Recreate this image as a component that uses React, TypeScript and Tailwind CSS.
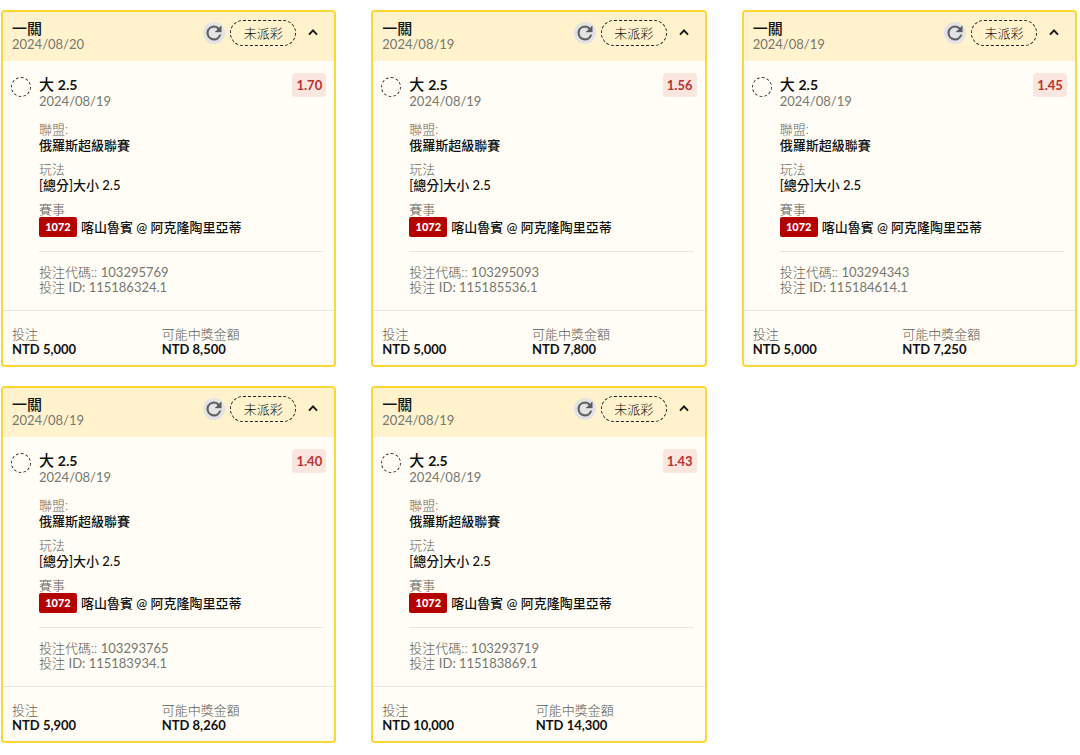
import React from 'react';

type Bet = {
  placed: string;
  matchDate: string;
  odds: string;
  code: string;
  id: string;
  stake: string;
  payout: string;
};

const bets: Bet[] = [
  { placed: '2024/08/20', matchDate: '2024/08/19', odds: '1.70', code: '103295769', id: '115186324.1', stake: '5,000', payout: '8,500' },
  { placed: '2024/08/19', matchDate: '2024/08/19', odds: '1.56', code: '103295093', id: '115185536.1', stake: '5,000', payout: '7,800' },
  { placed: '2024/08/19', matchDate: '2024/08/19', odds: '1.45', code: '103294343', id: '115184614.1', stake: '5,000', payout: '7,250' },
  { placed: '2024/08/19', matchDate: '2024/08/19', odds: '1.40', code: '103293765', id: '115183934.1', stake: '5,900', payout: '8,260' },
  { placed: '2024/08/19', matchDate: '2024/08/19', odds: '1.43', code: '103293719', id: '115183869.1', stake: '10,000', payout: '14,300' },
];

function RefreshIcon() {
  return (
    <svg viewBox="0 0 24 24" className="size-[22px]" fill="#5c5c5c" stroke="#5c5c5c" strokeWidth="0.3" aria-hidden="true">
      <path d="M17.65 6.35A7.96 7.96 0 0 0 12 4a8 8 0 1 0 7.73 10h-2.08A6 6 0 1 1 12 6c1.66 0 3.14.69 4.22 1.78L13 11h7V4z" />
    </svg>
  );
}

function Field({ label, children }: { label: string; children: React.ReactNode }) {
  return (
    <div>
      <dt className="font-light text-[#66665f]">{label}</dt>
      <dd className="font-medium">{children}</dd>
    </div>
  );
}

function BetCard({ bet }: { bet: Bet }) {
  return (
    <article className="overflow-hidden rounded-[4px] border-2 border-[#fdd835] bg-[#fffdf5]">
      <header className="flex items-start bg-[#fff2cc] pt-2 pr-[11px] pb-[9px] pl-[9px]">
        <div className="flex-1">
          <h2 className="text-[15px] leading-4 font-medium">一關</h2>
          <p className="text-[#777771]">{bet.placed}</p>
        </div>
        <div className="flex h-[26px] items-center">
          <button type="button" aria-label="重新整理" className="flex size-[22px] items-center justify-center rounded-full bg-[#e3e3e6]">
            <RefreshIcon />
          </button>
          <span className="ml-[5px] flex h-[26px] w-[66px] items-center justify-center rounded-full border border-dashed border-[#222] font-light">
            未派彩
          </span>
          <button type="button" aria-label="收合" className="ml-[7px] flex size-5 items-center justify-center">
            <svg viewBox="0 0 20 20" className="size-5" fill="none" stroke="#1a1a1a" strokeWidth="2" aria-hidden="true">
              <path d="M6 11.6 10 7.4l4 4.2" />
            </svg>
          </button>
        </div>
      </header>

      <section className="flex gap-2 px-2 pt-[15px] pb-[14px]">
        <span className="mt-px size-5 shrink-0 rounded-full border border-dashed border-[#222]" />
        <div className="flex-1">
          <div className="flex items-start justify-between">
            <div>
              <h3 className="text-[15px] leading-4 font-medium">
                大 <b className="text-sm leading-4 font-bold">2.5</b>
              </h3>
              <p className="text-[#777771]">{bet.matchDate}</p>
            </div>
            <span className="-mt-[3px] flex h-6 w-[34px] items-center justify-center rounded-[4px] bg-[#f9e6df] text-[13px] font-bold text-[#b9312f]">
              {bet.odds}
            </span>
          </div>
          <dl className="mt-3 flex flex-col gap-2">
            <Field label="聯盟:">俄羅斯超級聯賽</Field>
            <Field label="玩法">[總分]大小 2.5</Field>
            <Field label="賽事">
              <span className="flex items-center gap-1">
                <span className="flex h-5 w-[38px] items-center justify-center rounded-[2px] bg-[#b50000] text-[11px] font-black text-white">
                  1072
                </span>
                喀山魯賓 @ 阿克隆陶里亞蒂
              </span>
            </Field>
          </dl>
        </div>
      </section>

      <section className="mr-[11px] ml-9 border-t border-[#e6e5df] pt-[13px] pb-[15px] leading-[15px] font-light text-[#5c5c57]">
        <p>投注代碼:: <span className="font-normal text-[#777771]">{bet.code}</span></p>
        <p>投注 <span className="font-normal text-[#777771]">ID: {bet.id}</span></p>
      </section>

      <dl className="flex border-t border-[#e6e5df] px-[9px] pt-4 pb-2 leading-[15px]">
        <div className="flex-auto">
          <dt className="font-light text-[#5c5c57]">投注</dt>
          <dd className="font-bold">NTD {bet.stake}</dd>
        </div>
        <div className="flex-auto">
          <dt className="font-light text-[#5c5c57]">可能中獎金額</dt>
          <dd className="font-bold">NTD {bet.payout}</dd>
        </div>
      </dl>
    </article>
  );
}

export default function App() {
  return (
    <main className="grid grid-cols-3 gap-x-[35px] gap-y-[19px] bg-white pt-[10px] pr-[3px] pb-3 pl-px font-['Lato','Noto_Sans_CJK_TC',sans-serif] text-[13px] leading-4 text-[#111]">
      {bets.map((bet) => (
        <BetCard key={bet.id} bet={bet} />
      ))}
    </main>
  );
}
